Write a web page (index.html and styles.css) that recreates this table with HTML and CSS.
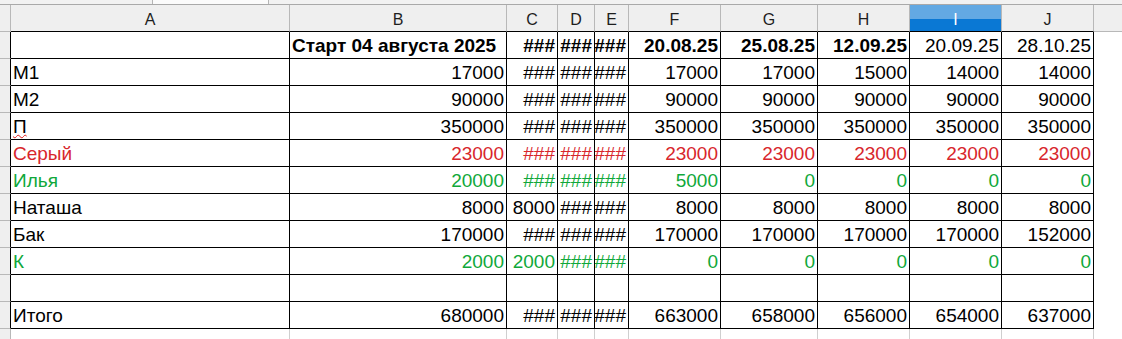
FILE: index.html
```html
<!DOCTYPE html>
<html lang="ru">
<head>
<meta charset="utf-8">
<title>Sheet</title>
<link rel="stylesheet" href="styles.css">
</head>
<body>
<div class="topstrip"><div class="tb-box"></div></div>
<div class="sheet">
  <div class="corner"></div>
  <div class="ch">A</div><div class="ch">B</div><div class="ch">C</div><div class="ch">D</div><div class="ch">E</div><div class="ch">F</div><div class="ch">G</div><div class="ch">H</div><div class="ch sel">I</div><div class="ch">J</div><div class="ch chk"></div>

  <div class="rh"></div>
  <div class="c"></div><div class="c b">Старт 04 августа 2025</div><div class="c n b">###</div><div class="c n b">###</div><div class="c n b">###</div><div class="c n b">20.08.25</div><div class="c n b">25.08.25</div><div class="c n b">12.09.25</div><div class="c n">20.09.25</div><div class="c n">28.10.25</div><div class="k"></div>

  <div class="rh"></div>
  <div class="c">М1</div><div class="c n">17000</div><div class="c n">###</div><div class="c n">###</div><div class="c n">###</div><div class="c n">17000</div><div class="c n">17000</div><div class="c n">15000</div><div class="c n">14000</div><div class="c n">14000</div><div class="k"></div>

  <div class="rh"></div>
  <div class="c">М2</div><div class="c n">90000</div><div class="c n">###</div><div class="c n">###</div><div class="c n">###</div><div class="c n">90000</div><div class="c n">90000</div><div class="c n">90000</div><div class="c n">90000</div><div class="c n">90000</div><div class="k"></div>

  <div class="rh"></div>
  <div class="c vis"><span class="spell">П</span></div><div class="c n">350000</div><div class="c n">###</div><div class="c n">###</div><div class="c n">###</div><div class="c n">350000</div><div class="c n">350000</div><div class="c n">350000</div><div class="c n">350000</div><div class="c n">350000</div><div class="k"></div>

  <div class="rh"></div>
  <div class="c red">Серый</div><div class="c n red">23000</div><div class="c n red">###</div><div class="c n red">###</div><div class="c n red">###</div><div class="c n red">23000</div><div class="c n red">23000</div><div class="c n red">23000</div><div class="c n red">23000</div><div class="c n red">23000</div><div class="k"></div>

  <div class="rh"></div>
  <div class="c green">Илья</div><div class="c n green">20000</div><div class="c n green">###</div><div class="c n green">###</div><div class="c n green">###</div><div class="c n green">5000</div><div class="c n green">0</div><div class="c n green">0</div><div class="c n green">0</div><div class="c n green">0</div><div class="k"></div>

  <div class="rh"></div>
  <div class="c">Наташа</div><div class="c n">8000</div><div class="c n">8000</div><div class="c n">###</div><div class="c n">###</div><div class="c n">8000</div><div class="c n">8000</div><div class="c n">8000</div><div class="c n">8000</div><div class="c n">8000</div><div class="k"></div>

  <div class="rh"></div>
  <div class="c">Бак</div><div class="c n">170000</div><div class="c n">###</div><div class="c n">###</div><div class="c n">###</div><div class="c n">170000</div><div class="c n">170000</div><div class="c n">170000</div><div class="c n">170000</div><div class="c n">152000</div><div class="k"></div>

  <div class="rh"></div>
  <div class="c green">К</div><div class="c n green">2000</div><div class="c n green">2000</div><div class="c n green">###</div><div class="c n green">###</div><div class="c n green">0</div><div class="c n green">0</div><div class="c n green">0</div><div class="c n green">0</div><div class="c n green">0</div><div class="k"></div>

  <div class="rh"></div>
  <div class="c"></div><div class="c"></div><div class="c"></div><div class="c"></div><div class="c"></div><div class="c"></div><div class="c"></div><div class="c"></div><div class="c"></div><div class="c"></div><div class="k"></div>

  <div class="rh"></div>
  <div class="c">Итого</div><div class="c n">680000</div><div class="c n">###</div><div class="c n">###</div><div class="c n">###</div><div class="c n">663000</div><div class="c n">658000</div><div class="c n">656000</div><div class="c n">654000</div><div class="c n">637000</div><div class="k"></div>

  <div class="rh last"></div>
  <div class="g"></div><div class="g"></div><div class="g"></div><div class="g"></div><div class="g"></div><div class="g"></div><div class="g"></div><div class="g"></div><div class="g"></div><div class="g"></div><div class="k"></div>
</div>
</body>
</html>
```

FILE: styles.css
```css
* { box-sizing: border-box; }
html, body {
  margin: 0;
  padding: 0;
  background: #ffffff;
  width: 1122px;
  height: 339px;
  overflow: hidden;
  font-family: "Liberation Sans", Arial, sans-serif;
}
.topstrip {
  height: 5px;
  background: #f2f2f2;
  border-bottom: 1px solid #a9a9a9;
  display: flex;
}
.tb-box {
  margin-left: 152px;
  width: 117px;
  height: 4px;
  background: #fbfbfb;
  border-left: 1px solid #b5b5b5;
  border-right: 1px solid #b5b5b5;
}
.sheet {
  display: grid;
  grid-template-columns: 11px 279px 217px 51px 37px 34px 92px 97px 92px 92px 92px 1fr;
  grid-template-rows: repeat(12, 27px) 10px;
  color: #000;
  font-size: 19px;
  line-height: 19px;
}
.corner {
  background: #efefef;
  border-right: 1px solid #b8b8b8;
  border-bottom: 1px solid #b8b8b8;
}
.ch {
  background: #efefef;
  border-right: 1px solid #b8b8b8;
  border-bottom: 1px solid #000;
  display: flex;
  align-items: center;
  justify-content: center;
  font-size: 16px;
  line-height: 16px;
  padding-top: 3px;
  color: #1e1e1e;
}
.ch.sel {
  background: linear-gradient(#63a9e3 0, #63a9e3 55%, #0a78d4 55%, #0a78d4 100%);
  color: #ffffff;
}
.ch.chk {
  border-right: none;
  border-bottom: 1px solid #b8b8b8;
}
.rh {
  background: #efefef;
  border-right: 1px solid #000;
  border-bottom: 1px solid #b8b8b8;
}
.rh.last {
  border-right: 1px solid #b8b8b8;
  border-bottom: none;
}
.c {
  border-right: 1px solid #000;
  border-bottom: 1px solid #000;
  display: flex;
  align-items: flex-end;
  justify-content: flex-start;
  padding: 0 2px 3px 2px;
  white-space: nowrap;
  overflow: hidden;
}
.c.vis { overflow: visible; }
.c.n { justify-content: flex-end; }
.b { font-weight: bold; }
.red { color: #d8262c; }
.green { color: #10a83a; }
.k { background: #fff; }
.g { border-right: 1px solid #cfcfcf; }
.spell {
  text-decoration: underline wavy #e01b1b;
  text-decoration-thickness: 1px;
  text-underline-offset: 1px;
}
```
